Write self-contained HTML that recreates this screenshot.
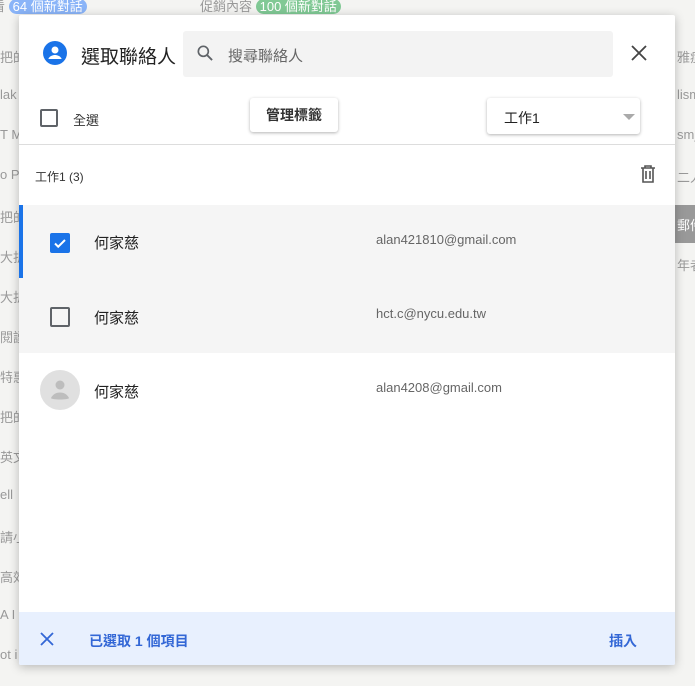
<!DOCTYPE html>
<html><head><meta charset="utf-8"><style>
*{margin:0;padding:0;box-sizing:border-box}
body{width:695px;height:686px;overflow:hidden;background:#f4f4f2;font-family:"Liberation Sans","Noto Sans CJK TC",sans-serif;position:relative}
.bg{position:absolute;font-size:13px;color:#999;white-space:nowrap}
.dlg{position:absolute;left:19px;top:15px;width:656px;height:650px;background:#fff;box-shadow:0 2px 10px rgba(0,0,0,.25);border-radius:2px;overflow:hidden}
.abs{position:absolute}
.cb{position:absolute;width:18px;height:18px;border:2px solid #5f6368;border-radius:2px}
.name{position:absolute;left:75px;font-size:15px;color:#222}
.mail{position:absolute;left:357px;font-size:13px;color:#666}
</style></head><body>
<div class="bg" style="left:-8px;top:-4px">看 <span style="background:#8ab4f8;color:#fff;border-radius:8px;padding:0 4px">64 個新對話</span></div>
<div class="bg" style="left:200px;top:-4px">促銷內容 <span style="background:#81c995;color:#fff;border-radius:8px;padding:0 4px">100 個新對話</span></div>
<div class="bg" style="left:0;top:47px">把的</div>
<div class="bg" style="left:0;top:87px">lak</div>
<div class="bg" style="left:0;top:127px">T M</div>
<div class="bg" style="left:0;top:167px">o P</div>
<div class="bg" style="left:0;top:207px">把的</div>
<div class="bg" style="left:0;top:247px">大折</div>
<div class="bg" style="left:0;top:287px">大折</div>
<div class="bg" style="left:0;top:327px">閱讀</div>
<div class="bg" style="left:0;top:367px">特惠</div>
<div class="bg" style="left:0;top:407px">把的</div>
<div class="bg" style="left:0;top:447px">英文</div>
<div class="bg" style="left:0;top:487px">ell</div>
<div class="bg" style="left:0;top:527px">請小</div>
<div class="bg" style="left:0;top:567px">高效</div>
<div class="bg" style="left:0;top:607px">A I</div>
<div class="bg" style="left:0;top:647px">ot i</div>
<div class="bg" style="left:677px;top:47px">雅症</div>
<div class="bg" style="left:677px;top:87px">lism</div>
<div class="bg" style="left:677px;top:127px">sm_</div>
<div class="bg" style="left:677px;top:167px">二人</div>
<div class="abs" style="left:675px;top:205px;width:20px;height:38px;background:#999"></div>
<div class="bg" style="left:677px;top:215px;color:#fff">郵件</div>
<div class="bg" style="left:677px;top:255px">年者</div>
<div class="dlg">
  <svg class="abs" style="left:24px;top:26px" width="24" height="24" viewBox="0 0 24 24"><circle cx="12" cy="12" r="12" fill="#1a73e8"/><circle cx="12" cy="9" r="3.5" fill="#fff"/><path d="M5.5 17.5c1.5-2.5 4-3.5 6.5-3.5s5 1 6.5 3.5v0.5h-13z" fill="#fff"/></svg>
  <div class="abs" style="left:62px;top:27px;font-size:19px;color:#222">選取聯絡人</div>
  <div class="abs" style="left:164px;top:16px;width:430px;height:46px;background:#f3f3f3;border-radius:3px"></div>
  <svg class="abs" style="left:176px;top:28px" width="20" height="20" viewBox="0 0 24 24"><circle cx="10" cy="10" r="6" fill="none" stroke="#5f6368" stroke-width="2"/><path d="M14.5 14.5l6 6" stroke="#5f6368" stroke-width="2.2"/></svg>
  <div class="abs" style="left:209px;top:30px;font-size:15px;color:#666">搜尋聯絡人</div>
  <svg class="abs" style="left:611px;top:29px" width="18" height="18" viewBox="0 0 18 18"><path d="M2 2l14 14M16 2L2 16" stroke="#444" stroke-width="1.8"/></svg>
  <div class="cb" style="left:21px;top:94px"></div>
  <div class="abs" style="left:54px;top:95px;font-size:13px;color:#333">全選</div>
  <div class="abs" style="left:231px;top:83px;width:88px;height:34px;background:#fff;box-shadow:0 1px 3px rgba(0,0,0,.3);border-radius:3px;font-size:14px;font-weight:bold;color:#333;text-align:center;line-height:34px">管理標籤</div>
  <div class="abs" style="left:468px;top:83px;width:153px;height:36px;background:#fff;box-shadow:0 1px 3px rgba(0,0,0,.3);border-radius:3px"></div>
  <div class="abs" style="left:485px;top:93px;font-size:14px;color:#222">工作1</div>
  <div class="abs" style="left:604px;top:99px;border-left:6px solid transparent;border-right:6px solid transparent;border-top:6px solid #aaa"></div>
  <div class="abs" style="left:0;top:129px;width:656px;height:1px;background:#ddd"></div>
  <div class="abs" style="left:16px;top:153px;font-size:12px;color:#333">工作1 (3)</div>
  <svg class="abs" style="left:620px;top:149px" width="18" height="20" viewBox="0 0 18 20"><path d="M2 4h14M6 4V2h6v2M4 4v14h10V4M7 7v8M11 7v8" fill="none" stroke="#555" stroke-width="1.6"/></svg>
  <div class="abs" style="left:0;top:190px;width:656px;height:148px;background:#f5f5f5"></div>
  <div class="abs" style="left:0;top:190px;width:4px;height:73px;background:#1a73e8"></div>
  <div class="abs" style="left:31px;top:218px;width:20px;height:20px;background:#1a73e8;border-radius:2px"></div>
  <svg class="abs" style="left:31px;top:218px" width="20" height="20" viewBox="0 0 20 20"><path d="M5 10.5l3.2 3.2L15 7" fill="none" stroke="#fff" stroke-width="2"/></svg>
  <div class="name" style="top:217px">何家慈</div>
  <div class="mail" style="top:217px">alan421810@gmail.com</div>
  <div class="cb" style="left:31px;top:292px;width:20px;height:20px"></div>
  <div class="name" style="top:292px">何家慈</div>
  <div class="mail" style="top:291px">hct.c@nycu.edu.tw</div>
  <svg class="abs" style="left:21px;top:355px" width="40" height="40" viewBox="0 0 40 40"><circle cx="20" cy="20" r="20" fill="#e0e0e0"/><circle cx="20" cy="15" r="4.5" fill="#bdbdbd"/><path d="M11 28c2-4 5.5-5.5 9-5.5s7 1.5 9 5.5c0 2-18 2-18 0z" fill="#bdbdbd"/></svg>
  <div class="name" style="top:366px">何家慈</div>
  <div class="mail" style="top:365px">alan4208@gmail.com</div>
  <div class="abs" style="left:0;top:597px;width:656px;height:53px;background:#e8f0fe"></div>
  <svg class="abs" style="left:21px;top:617px" width="14" height="14" viewBox="0 0 14 14"><path d="M1 1l12 12M13 1L1 13" stroke="#3367d6" stroke-width="1.8"/></svg>
  <div class="abs" style="left:70px;top:616px;font-size:14px;font-weight:bold;color:#3367d6">已選取 1 個項目</div>
  <div class="abs" style="left:590px;top:616px;font-size:14px;font-weight:bold;color:#3367d6">插入</div>
</div>
</body></html>
